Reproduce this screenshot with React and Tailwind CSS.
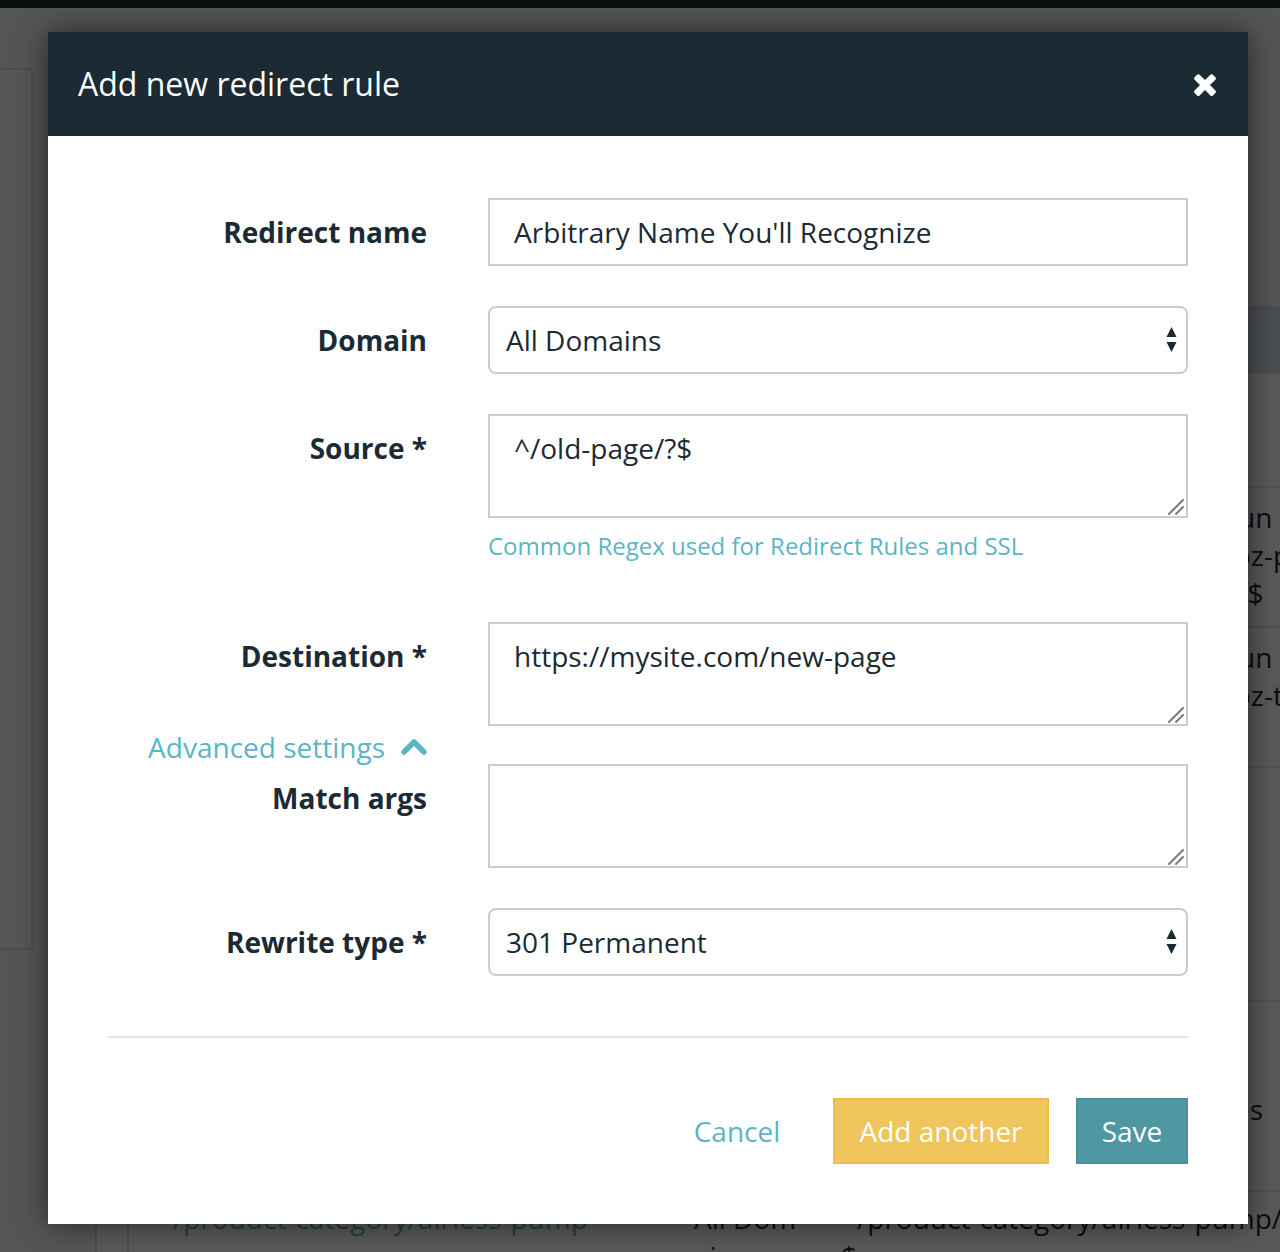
import React from "react";

function CloseIcon() {
  return (
    <svg width="22" height="24" viewBox="110 246 1188 1308" fill="#ffffff">
      <path d="M1298 1322q0 40-28 68l-136 136q-28 28-68 28t-68-28l-294-294-294 294q-28 28-68 28t-68-28l-136-136q-28-28-28-68t28-68l294-294-294-294q-28-28-28-68t28-68l136-136q28-28 68-28t68 28l294 294 294-294q28-28 68-28t68 28l136 136q28 28 28 68t-28 68l-294 294 294 294q28 28 28 68z" />
    </svg>
  );
}

function SelectArrows() {
  return (
    <svg width="11" height="26" viewBox="0 0 11 26" fill="#1c2a33">
      <path d="M5.5 0 L10.5 10 L0.5 10 Z" />
      <path d="M0.5 15 L10.5 15 L5.5 25 Z" />
    </svg>
  );
}

function Grip() {
  return (
    <svg width="18" height="16" viewBox="0 0 18 16" className="absolute right-[3px] bottom-[3px]">
      <path d="M16 1 L2 15" stroke="#7a7a7a" strokeWidth="2" strokeLinecap="round" />
      <path d="M16 8 L9 15" stroke="#7a7a7a" strokeWidth="2" strokeLinecap="round" />
    </svg>
  );
}

function ChevronUp() {
  return (
    <svg width="26" height="18" viewBox="0 0 26 18">
      <path d="M3 14 L13 4 L23 14" fill="none" stroke="#5ab5c5" strokeWidth="5.5" strokeLinecap="round" strokeLinejoin="round" />
    </svg>
  );
}

function Label({ children }) {
  return (
    <div className="w-[319px] shrink-0 pt-[16px] text-right text-[28px] leading-[36px] font-bold text-[#1c2a33]">
      {children}
    </div>
  );
}

function TextArea({ value }) {
  return (
    <div className="relative w-[700px] h-[104px]">
      <textarea
        defaultValue={value}
        className="block w-full h-full border-2 border-[#cccccc] px-[24px] pt-[14px] text-[28px] leading-[36px] text-[#1c2a33] resize-none outline-none font-['Open_Sans',sans-serif] bg-white"
      />
      <Grip />
    </div>
  );
}

function Select({ value }) {
  return (
    <div className="w-[700px] h-[68px] border-2 border-[#cccccc] rounded-[8px] flex items-center justify-between pl-[16px] pr-[9px] text-[28px] text-[#1c2a33] bg-white">
      <span>{value}</span>
      <SelectArrows />
    </div>
  );
}

function BgTable() {
  const line = "block whitespace-nowrap leading-[38px]";
  return (
    <div className="mt-[298px] ml-[62px] w-[1216px] shrink-0 border-l-2 border-[#d8d8d8] bg-white text-[28px] text-[#1c2a33]">
      <div className="h-[66px] bg-[#d3dde6]" />
      <div className="h-[114px] border-t-2 border-[#e5e5e5]" />
      <div className="h-[140px] border-t-2 border-[#e5e5e5] flex">
        <div className="ml-[744px] pt-[10px]">
          <span className={line}>^/product/airless-pump-tube-fun</span>
          <span className={line}>nel-shape-for-cosmetic-uses-1oz-pump</span>
          <span className={line}>ump-bottle-30ml-50ml-100ml/?$</span>
        </div>
      </div>
      <div className="h-[140px] border-t-2 border-[#e5e5e5] flex">
        <div className="ml-[744px] pt-[10px]">
          <span className={line}>^/product/airless-pump-tube-fun</span>
          <span className={line}>nel-shape-for-cosmetic-uses-1oz-tube</span>
        </div>
      </div>
      <div className="h-[234px] border-t-2 border-[#e5e5e5]" />
      <div className="h-[190px] border-t-2 border-[#e5e5e5] flex">
        <div className="ml-[744px] pt-[88px]">
          <span className={line}>^/product/airless-pumps-bottles</span>
        </div>
      </div>
      <div className="h-[120px] border-t-2 border-[#e5e5e5] flex">
        <div className="w-[32px] h-full border-r-2 border-[#d8d8d8]" />
        <div className="w-[565px] pt-[7px] pl-[14px] flex items-start gap-[18px]">
          <svg width="12" height="38" viewBox="0 0 12 38">
            <path d="M1.5 16 L6 21 L10.5 16" fill="none" stroke="#1c2a33" strokeWidth="2.5" />
          </svg>
          <span className="leading-[38px] text-[#5ab5c5] whitespace-nowrap">/product-category/airless-pump</span>
        </div>
        <div className="w-[147px] pt-[7px] leading-[38px]">
          <span className="block">All Dom</span>
          <span className="block">ains</span>
        </div>
        <div className="pt-[7px]">
          <span className={line}>^/product-category/airless-pump/?</span>
          <span className={line}>$</span>
        </div>
      </div>
    </div>
  );
}

export default function App() {
  return (
    <div className="relative w-[1280px] h-[1252px] overflow-hidden bg-[#f3f3f3] font-['Open_Sans',sans-serif]">
      {/* underlying page */}
      <div className="h-[8px] bg-[#1c2a33]" />
      <div className="flex">
        <div className="mt-[60px] w-[33px] h-[882px] shrink-0 bg-[#f7f7f7] border-y-2 border-r-2 border-[#dcdcdc]" />
        <BgTable />
      </div>

      {/* overlay + modal */}
      <div className="absolute inset-0 bg-black/65 pt-[32px] pl-[48px]">
        <div className="w-[1200px] h-[1192px] bg-white shadow-[0_0_28px_rgba(0,0,0,0.55)] flex flex-col">
          <div className="h-[104px] bg-[#1c2a33] flex items-center justify-between pl-[30px] pr-[32px]">
            <span className="text-[32px] text-white leading-none">Add new redirect rule</span>
            <CloseIcon />
          </div>

          <div className="px-[60px] pt-[62px] flex flex-col">
            {/* Redirect name */}
            <div className="flex items-start gap-[61px]">
              <Label>Redirect name</Label>
              <input
                defaultValue="Arbitrary Name You'll Recognize"
                className="w-[700px] h-[68px] border-2 border-[#cccccc] px-[24px] text-[28px] text-[#1c2a33] outline-none font-['Open_Sans',sans-serif]"
              />
            </div>

            {/* Domain */}
            <div className="mt-[40px] flex items-start gap-[61px]">
              <Label>Domain</Label>
              <Select value="All Domains" />
            </div>

            {/* Source */}
            <div className="mt-[40px] flex items-start gap-[61px]">
              <Label>Source *</Label>
              <div className="flex flex-col">
                <TextArea value="^/old-page/?$" />
                <span className="mt-[11px] text-[24px] leading-[34px] text-[#5ab5c5]">
                  Common Regex used for Redirect Rules and SSL
                </span>
              </div>
            </div>

            {/* Destination */}
            <div className="mt-[59px] flex items-start gap-[61px]">
              <Label>Destination *</Label>
              <TextArea value="https://mysite.com/new-page" />
            </div>

            {/* Match args */}
            <div className="mt-[38px] flex items-start gap-[61px]">
              <div className="w-[319px] shrink-0 -mt-[35px] flex flex-col items-end">
                <div className="flex items-center gap-[16px] text-[28px] leading-[36px] text-[#5ab5c5]">
                  <span>Advanced settings</span>
                  <ChevronUp />
                </div>
                <div className="mt-[15px] text-[28px] leading-[36px] font-bold text-[#1c2a33]">Match args</div>
              </div>
              <TextArea value="" />
            </div>

            {/* Rewrite type */}
            <div className="mt-[40px] flex items-start gap-[61px]">
              <Label>Rewrite type *</Label>
              <Select value="301 Permanent" />
            </div>

            <div className="mt-[60px] h-[2px] bg-[#e6e6e6]" />

            <div className="mt-[60px] flex justify-end gap-[27px]">
              <button className="w-[138px] h-[66px] text-[28px] text-[#5ab5c5] font-['Open_Sans',sans-serif]">
                Cancel
              </button>
              <button className="w-[216px] h-[66px] text-[28px] text-white bg-[#f0c55c] border-2 border-[#ecbd4c] font-['Open_Sans',sans-serif]">
                Add another
              </button>
              <button className="w-[112px] h-[66px] text-[28px] text-white bg-[#4f97a3] border-2 border-[#4a909c] font-['Open_Sans',sans-serif]">
                Save
              </button>
            </div>
          </div>
        </div>
      </div>
    </div>
  );
}
